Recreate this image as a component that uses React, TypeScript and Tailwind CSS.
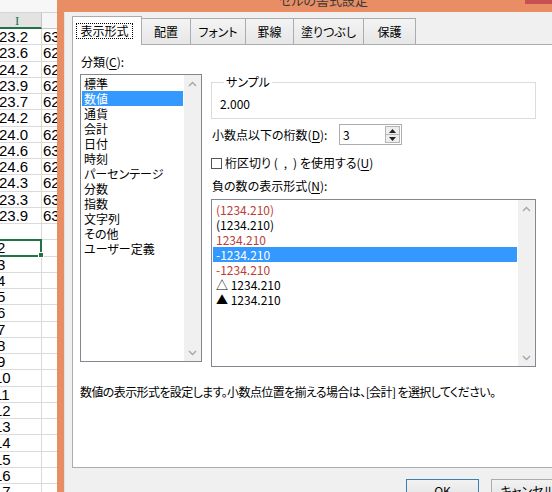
import React from "react";

const upper: [string, string][] = [
  ["23.2", "63"],
  ["23.6", "62"],
  ["24.2", "62"],
  ["23.9", "62"],
  ["23.7", "62"],
  ["24.2", "62"],
  ["24.0", "62"],
  ["24.6", "63"],
  ["24.6", "62"],
  ["24.3", "62"],
  ["23.3", "63"],
  ["23.9", "63"],
];

const lower = ["3", "4", "5", "6", "7", "8", "9", "10", "11", "12", "13", "14", "15", "16", "17"];

const categories = [
  "標準",
  "数値",
  "通貨",
  "会計",
  "日付",
  "時刻",
  "パーセンテージ",
  "分数",
  "指数",
  "文字列",
  "その他",
  "ユーザー定義",
];

const negatives: { t: string; red: boolean }[] = [
  { t: "(1234.210)", red: true },
  { t: "(1234.210)", red: false },
  { t: "1234.210", red: true },
  { t: "-1234.210", red: false },
  { t: "-1234.210", red: true },
  { t: "△ 1234.210", red: false },
  { t: "▲ 1234.210", red: false },
];

function ChevUp() {
  return (
    <svg width="9" height="6" viewBox="0 0 9 6">
      <polyline points="1,5 4.5,1.5 8,5" fill="none" stroke="#a6a6a6" strokeWidth="1.4" />
    </svg>
  );
}
function ChevDown() {
  return (
    <svg width="9" height="6" viewBox="0 0 9 6">
      <polyline points="1,1 4.5,4.5 8,1" fill="none" stroke="#a6a6a6" strokeWidth="1.4" />
    </svg>
  );
}

function ScrollBar() {
  return (
    <div className="w-[17px] h-full bg-[#f0f0f0] flex flex-col justify-between">
      <div className="h-[17px] flex items-center justify-center">
        <ChevUp />
      </div>
      <div className="h-[17px] flex items-center justify-center">
        <ChevDown />
      </div>
    </div>
  );
}

function Sheet() {
  return (
    <div className="w-[57px] h-[492px] shrink-0 overflow-hidden bg-white flex flex-col font-['Liberation_Sans',Arial,sans-serif] text-black">
      <div className="h-[13px] shrink-0 bg-[#f7f7f7] border-b border-[#d4d4d4]" />
      <div className="h-[16px] shrink-0 flex">
        <div className="w-[42px] h-full bg-[#e3e3e3] border-r border-[#c6c6c6] border-b-2 border-b-[#217346] flex items-center pl-[15px] text-[#217346] text-[13px] leading-none font-['Liberation_Serif',serif]">
          I
        </div>
        <div className="flex-1 h-full bg-[#f6f6f6] border-b border-[#c6c6c6]" />
      </div>
      {upper.map(([a, b], i) => (
        <div key={"u" + i} className="h-[16.25px] shrink-0 flex border-b border-[#dadada] text-[15px] leading-[15px]">
          <div className="w-[42px] h-full border-r border-[#dadada] overflow-hidden whitespace-nowrap flex items-center">
            <span className="ml-[-1px]">{a}</span>
          </div>
          <div className="flex-1 h-full overflow-hidden whitespace-nowrap flex items-center">
            <span className="ml-[1px]">{b}</span>
          </div>
        </div>
      ))}
      <div className="h-[16.25px] shrink-0 flex border-b border-[#dadada]">
        <div className="w-[42px] h-full border-r border-[#dadada]" />
      </div>
      <div className="h-[16.25px] shrink-0 flex border-b border-[#dadada] text-[15px] leading-[15px]">
        <div className="relative w-[42px] h-full border-r border-[#dadada] flex items-center">
          <span className="ml-[-3px]">2</span>
          <div className="absolute left-[-2px] top-[-1.25px] w-[44px] h-[17.5px] border-2 border-[#217346]" />
          <div className="absolute left-[38px] top-[12px] w-[6px] h-[6px] bg-[#217346] border border-white" />
        </div>
      </div>
      {lower.map((v, i) => (
        <div key={"l" + i} className="h-[16.25px] shrink-0 flex border-b border-[#dadada] text-[15px] leading-[15px]">
          <div className="w-[42px] h-full border-r border-[#dadada] overflow-hidden whitespace-nowrap flex items-center">
            <span className={v.length > 1 ? "ml-[-6px]" : "ml-[-3px]"}>{v}</span>
          </div>
        </div>
      ))}
    </div>
  );
}

function Tab({ label, w }: { label: string; w: string }) {
  return (
    <div
      className={
        "h-[27px] shrink-0 border-t border-r border-[#acacac] bg-gradient-to-b from-[#f3f3f3] to-[#e6e6e6] flex items-center justify-center pb-[1px] " +
        w
      }
    >
      {label}
    </div>
  );
}

function Dialog() {
  return (
    <div className="w-[495px] h-[492px] shrink-0 bg-[#e88d64] flex flex-col font-['Noto_Sans_CJK_JP',sans-serif] [font-feature-settings:'palt'] text-[12px] leading-[16px] text-black">
      <div className="h-[12px] shrink-0 flex overflow-hidden">
        <div className="flex-1 pl-[222px]">
          <div className="mt-[-7px] text-[13px] leading-[13px] text-[#3a3a3a] whitespace-nowrap">セルの書式設定</div>
        </div>
        <div className="w-[27px] h-[4px] bg-[#c75050]" />
      </div>
      <div className="flex-1 ml-[7px] bg-[#f0f0f0] border-l border-[#e2e2e2] flex flex-col pt-[4px] pl-[7px] overflow-hidden">
        <div className="h-[29px] shrink-0 flex items-end">
          <div className="relative z-10 w-[70px] h-[29px] shrink-0 bg-white border-t border-l border-r border-[#acacac] pl-[3px] pt-[6px]">
            <div className="w-[57px] h-[16px] border border-dotted border-black flex items-center justify-center">
              表示形式
            </div>
          </div>
          <Tab label="配置" w="w-[49px]" />
          <Tab label="フォント" w="w-[55px]" />
          <Tab label="罫線" w="w-[48px]" />
          <Tab label="塗りつぶし" w="w-[70px]" />
          <Tab label="保護" w="w-[52px]" />
        </div>
        <div className="-mt-[1px] w-[494px] h-[424px] shrink-0 bg-white border border-[#acacac] pl-[7px] pt-[9px] flex flex-col">
          <div className="flex">
            <div className="w-[122px] shrink-0 flex flex-col">
              <div className="h-[16px] pl-[1px] whitespace-nowrap">
                分類(<span className="underline underline-offset-2">C</span>):
              </div>
              <div className="mt-[4px] w-[122px] h-[288px] border border-[#828790] flex">
                <div className="flex-1 pt-[1px] px-[1px] flex flex-col">
                  {categories.map((c, i) => (
                    <div
                      key={c}
                      className={
                        "h-[15px] leading-[15px] pl-[2px] whitespace-nowrap " +
                        (i === 1 ? "bg-[#3399ff] text-white" : "")
                      }
                    >
                      {c}
                    </div>
                  ))}
                </div>
                <ScrollBar />
              </div>
            </div>
            <div className="ml-[9px] w-[325px] shrink-0 flex flex-col pt-[20px]">
              <fieldset className="w-[325px] border border-[#dcdcdc] pl-[8px] pb-[6px]">
                <legend className="ml-[4px] px-[2px] leading-[16px]">サンプル</legend>
                <div className="mt-[6px] h-[16px]">2.000</div>
              </fieldset>
              <div className="mt-[5px] h-[21px] flex items-center">
                <div className="w-[128px] pl-[1px] whitespace-nowrap">
                  小数点以下の桁数(<span className="underline underline-offset-2">D</span>):
                </div>
                <div className="w-[63px] h-[21px] border border-[#abadb3] bg-white flex items-center">
                  <span className="flex-1 pl-[3px]">3</span>
                  <div className="w-[16px] h-full flex flex-col py-[1px] pr-[1px]">
                    <div className="flex-1 border border-[#b5b5b5] bg-[#eeeeee] flex items-center justify-center">
                      <svg width="7" height="4" viewBox="0 0 7 4">
                        <polygon points="0,4 3.5,0 7,4" fill="#222" />
                      </svg>
                    </div>
                    <div className="flex-1 border border-t-0 border-[#b5b5b5] bg-[#eeeeee] flex items-center justify-center">
                      <svg width="7" height="4" viewBox="0 0 7 4">
                        <polygon points="0,0 3.5,4 7,0" fill="#222" />
                      </svg>
                    </div>
                  </div>
                </div>
              </div>
              <div className="mt-[10px] h-[16px] flex items-center gap-[3px]">
                <div className="w-[11px] h-[11px] border border-[#555] bg-white shrink-0" />
                <div className="whitespace-nowrap">
                  桁区切り (&#8194;,&#8194;) を使用する(<span className="underline underline-offset-2">U</span>)
                </div>
              </div>
              <div className="mt-[7px] h-[16px] pl-[1px] whitespace-nowrap">
                負の数の表示形式(<span className="underline underline-offset-2">N</span>):
              </div>
              <div className="mt-[5px] w-[325px] h-[168px] border border-[#828790] flex">
                <div className="flex-1 pt-[2px] px-[1px] flex flex-col">
                  {negatives.map((n, i) => (
                    <div
                      key={i}
                      className={
                        "h-[15px] leading-[15px] pl-[3px] whitespace-nowrap " +
                        (i === 3 ? "bg-[#3399ff] text-white" : n.red ? "text-[#bb3d36]" : "")
                      }
                    >
                      {n.t}
                    </div>
                  ))}
                </div>
                <ScrollBar />
              </div>
            </div>
          </div>
          <div className="mt-[17px] h-[16px] whitespace-nowrap tracking-[-0.6px]">
            数値の表示形式を設定します。小数点位置を揃える場合は、[会計] を選択してください。
          </div>
        </div>
        <div className="mt-[11px] ml-[334px] flex gap-[12px] shrink-0">
          <div className="w-[73px] h-[23px] shrink-0 border border-[#3c7fb1] bg-gradient-to-b from-[#f2f2f2] to-[#e2e2e2] flex items-center justify-center">
            OK
          </div>
          <div className="w-[73px] h-[23px] shrink-0 border border-[#adadad] bg-gradient-to-b from-[#f2f2f2] to-[#e2e2e2] flex items-center justify-center">
            キャンセル
          </div>
        </div>
      </div>
    </div>
  );
}

export default function App() {
  return (
    <div className="w-[552px] h-[492px] overflow-hidden flex bg-white">
      <Sheet />
      <Dialog />
    </div>
  );
}
